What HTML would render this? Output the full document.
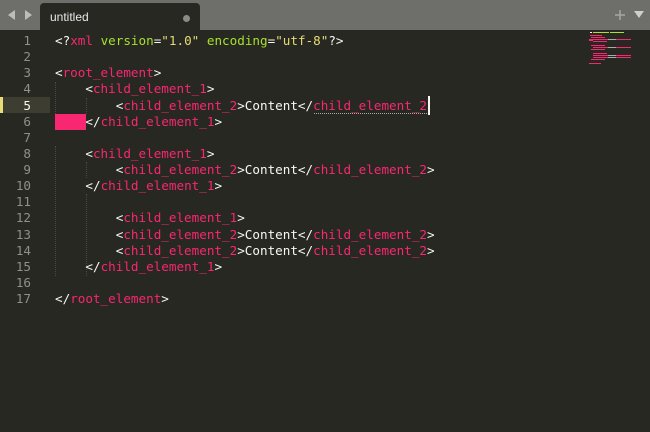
<!DOCTYPE html>
<html><head><meta charset="utf-8"><style>
html,body{margin:0;padding:0;width:650px;height:432px;overflow:hidden;background:#272822;}
#tabbar{position:absolute;left:0;top:0;width:650px;height:30px;background:#6e6e6b;}
#tab{position:absolute;left:40px;top:3px;width:160px;height:28px;background:#272822;border-radius:4px 4px 0 0;}
#tab span{position:absolute;left:10px;top:7px;font:12px "Liberation Sans",sans-serif;color:#e8e8e8;}
#tab i{position:absolute;left:143px;top:12px;width:7px;height:7px;border-radius:50%;background:#8a8a87;}
.code{position:absolute;font-family:"DejaVu Sans Mono","Liberation Mono",monospace;font-size:12.62px;white-space:pre;line-height:16.125px;}
.lns{position:absolute;left:0;top:33px;width:31px;text-align:right;color:#8f908a;}
.w{color:#f8f8f2}.p{color:#f92672}.g{color:#a6e22e}.y{color:#e6db74}
.guide{position:absolute;width:0;border-left:1px dotted #4a4a44;}
</style></head><body>
<div id="tabbar">
<svg style="position:absolute;left:8px;top:9px" width="24" height="12"><polygon points="0,6 7,1 7,11" fill="#bdbdba"/><polygon points="24,6 17,1 17,11" fill="#bdbdba"/></svg>
<div id="tab"><span>untitled</span><i></i></div>
<svg style="position:absolute;left:614px;top:9px" width="32" height="12"><path d="M6 1V11M1 6H11" stroke="#a5a5a2" stroke-width="1.5"/><polygon points="20,2 30,2 25,9" fill="#cfcfcc"/></svg>
</div>
<div style="position:absolute;left:0;top:97px;width:50px;height:16px;background:#3e3d32"></div>
<div style="position:absolute;left:0;top:97px;width:3px;height:16px;background:#e6db74"></div>
<div style="position:absolute;left:55px;top:114px;width:31px;height:16px;background:#f92672"></div>
<div class="guide" style="left:55px;top:82px;height:32px"></div>
<div class="guide" style="left:86px;top:98px;height:16px"></div>
<div class="guide" style="left:55px;top:146px;height:130px"></div>
<div class="guide" style="left:86px;top:162px;height:16px"></div>
<div class="guide" style="left:86px;top:194px;height:82px"></div>
<div style="position:absolute;left:314px;top:113px;width:113px;border-top:1px dotted #aaa"></div>
<div style="position:absolute;left:428px;top:96px;width:2px;height:19px;background:#f8f8f0"></div>
<div class="code lns">1
2
3
4
<span style="color:#f8f8f2">5</span>
6
7
8
9
10
11
12
13
14
15
16
17</div>
<div class="code" style="left:55px;top:33px"><span class="w">&lt;?</span><span class="p">xml</span> <span class="g">version</span><span class="w">=</span><span class="y">"1.0"</span> <span class="g">encoding</span><span class="w">=</span><span class="y">"utf-8"</span><span class="w">?&gt;</span>

<span class="w">&lt;</span><span class="p">root_element</span><span class="w">&gt;</span>
    <span class="w">&lt;</span><span class="p">child_element_1</span><span class="w">&gt;</span>
        <span class="w">&lt;</span><span class="p">child_element_2</span><span class="w">&gt;Content&lt;/</span><span class="p">child_element_2</span>
    <span class="w">&lt;/</span><span class="p">child_element_1</span><span class="w">&gt;</span>

    <span class="w">&lt;</span><span class="p">child_element_1</span><span class="w">&gt;</span>
        <span class="w">&lt;</span><span class="p">child_element_2</span><span class="w">&gt;Content&lt;/</span><span class="p">child_element_2</span><span class="w">&gt;</span>
    <span class="w">&lt;/</span><span class="p">child_element_1</span><span class="w">&gt;</span>

        <span class="w">&lt;</span><span class="p">child_element_1</span><span class="w">&gt;</span>
        <span class="w">&lt;</span><span class="p">child_element_2</span><span class="w">&gt;Content&lt;/</span><span class="p">child_element_2</span><span class="w">&gt;</span>
        <span class="w">&lt;</span><span class="p">child_element_2</span><span class="w">&gt;Content&lt;/</span><span class="p">child_element_2</span><span class="w">&gt;</span>
    <span class="w">&lt;/</span><span class="p">child_element_1</span><span class="w">&gt;</span>

<span class="w">&lt;/</span><span class="p">root_element</span><span class="w">&gt;</span></div>
<svg style="position:absolute;left:589px;top:31px" width="50" height="35">
<rect x="1" y="1" width="2" height="1" fill="#f8f8f2"/><rect x="4" y="1" width="16" height="1" fill="#a6e22e"/><rect x="21" y="1" width="14" height="1" fill="#a6e22e"/>
<rect x="1" y="4" width="12" height="1" fill="#f92672"/>
<rect x="2" y="6" width="14" height="1" fill="#f92672"/>
<rect x="0" y="8" width="4" height="2" fill="#f92672"/><rect x="4" y="8" width="15" height="1" fill="#f92672"/><rect x="19" y="8" width="8" height="1" fill="#aaa"/><rect x="27" y="8" width="15" height="1" fill="#f92672"/>
<rect x="4" y="10" width="14" height="1" fill="#f92672"/>
<rect x="2" y="14" width="14" height="1" fill="#f92672"/><rect x="4" y="16" width="15" height="1" fill="#f92672"/><rect x="19" y="16" width="8" height="1" fill="#aaa"/><rect x="27" y="16" width="15" height="1" fill="#f92672"/>
<rect x="2" y="18" width="14" height="1" fill="#f92672"/>
<rect x="4" y="22" width="14" height="1" fill="#f92672"/>
<rect x="4" y="24" width="15" height="1" fill="#f92672"/><rect x="19" y="24" width="8" height="1" fill="#aaa"/><rect x="27" y="24" width="15" height="1" fill="#f92672"/>
<rect x="4" y="26" width="15" height="1" fill="#f92672"/><rect x="19" y="26" width="8" height="1" fill="#aaa"/><rect x="27" y="26" width="15" height="1" fill="#f92672"/>
<rect x="2" y="28" width="14" height="1" fill="#f92672"/>
<rect x="0" y="32" width="12" height="1" fill="#f92672"/>
</svg>
</body></html>
